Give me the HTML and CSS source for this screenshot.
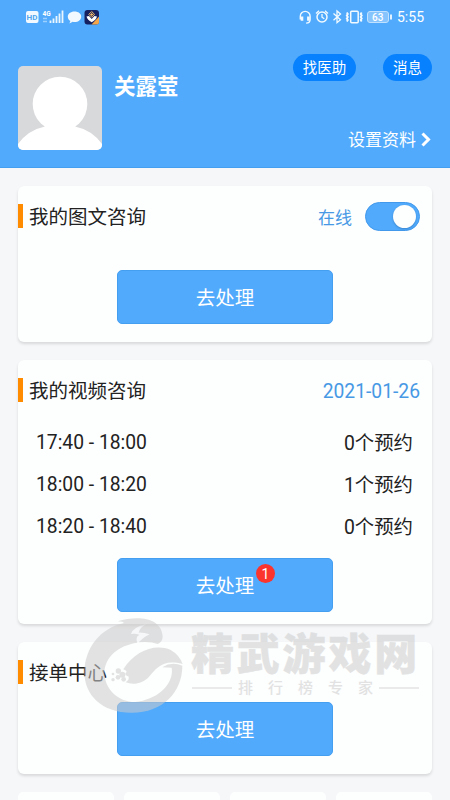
FILE: index.html
```html
<!DOCTYPE html>
<html lang="zh-CN">
<head>
<meta charset="utf-8">
<meta name="viewport" content="width=device-width, initial-scale=1">
<title>我的咨询</title>
<link rel="stylesheet" href="styles.css">
</head>
<body>
<div class="screen">
  <header class="header">
    <div class="status">
      <svg class="status-left" viewBox="0 0 76 18" width="76" height="18">
        <rect x="1" y="3" width="12.5" height="12" rx="2" fill="#f2faff"/>
        <text x="1.600" y="12.2" class="hd">HD</text>
        <text x="17.5" y="7.5" class="net">4G</text>
        <path d="M18 10.5h4M18 13.5h4" stroke="#9bd0ff" stroke-width="1.4"/>
        <path d="M25.5 12.5V15M28.5 10.5V15M31.5 8V15M34.5 5.5V15M37.5 2.5V15" stroke="#e9f6ff" stroke-width="1.8"/>
        <path d="M49.500 3.500c-4 0-6.700 2.300-6.700 5.200 0 1.800 1 3.300 2.600 4.200l-1 2.600 3.300-1.700c.6.100 1.200.2 1.800.2 3.900 0 6.700-2.300 6.700-5.300s-2.800-5.200-6.700-5.200z" fill="#f2faff"/>
        <rect x="59.500" y="2" width="14.500" height="14.500" rx="3" fill="#152060"/>
        <path d="M66.500 16.500l7.500-8V14q0 2.500-2.500 2.500z" fill="#f5a54a"/>
        <path d="M61.500 8.500l2.500-.5 2.700 3 2.700-3 2.600.5q-1 3.500-5.300 5.800-4.200-2.300-5.200-5.800z" fill="#fff"/>
        <path d="M66.700 3.500l2.900 2.900-2.900 2.900-2.900-2.900z" fill="#152060" stroke="#efb665" stroke-width="1"/>
        <path d="M66.700 5v3M65.200 6.500h3" stroke="#efb665"/>
      </svg>
      <div class="status-right">
        <svg viewBox="0 0 96 18" width="96" height="18" fill="none" stroke="#f2faff">
          <path d="M2.300 11.500V8.300a4.900 4.900 0 0 1 9.800 0v3.200q0 3.500-4 3.600" stroke-width="1.400"/>
          <path d="M4 8.500v4.200M10.400 8.500v4.200" stroke-width="2.600"/>
          <circle cx="24" cy="9" r="5" stroke-width="1.500"/>
          <path d="M24 6v3.200l2.300 1.600M18 5.500l3-2.700M30 5.500l-3-2.700" stroke-width="1.300"/>
          <path d="M35.500 5.500l7 6.200-3.500 3V3l3.500 3-7 6.200" stroke-width="1.300"/>
          <rect x="52.700" y="3.200" width="7.500" height="11.600" rx="1" stroke-width="1.500"/>
          <path d="M48.800 4.500l1 1.500-1 1.500 1 1.500-1 1.500 1 1.500-1 1.500M63.700 4.500l-1 1.500 1 1.500-1 1.500 1 1.500-1 1.500 1 1.500" stroke-width="1.900"/>
          <rect x="69.500" y="3.500" width="21" height="11" rx="2.500" fill="#86c4fd" stroke="#c0e1ff"/>
          <path d="M93 6.500v5" stroke-width="1.800"/>
          <text x="74" y="12.700" class="battery">63</text>
        </svg>
        <span class="clock">5:55</span>
      </div>
    </div>
    <div class="profile">
      <svg class="avatar" viewBox="0 0 84 84" width="84" height="84">
        <rect width="84" height="84" fill="#d8d9db"/>
        <circle cx="42" cy="38" r="27.300" fill="#fff"/>
        <path d="M0 78Q10 64 27 60.500L24 57H60L57 60.500Q74 64 84 78V84H0z" fill="#fff"/>
      </svg>
      <h1 class="name">关露莹</h1>
      <div class="actions">
        <div class="pills"><span class="pill">找医助</span><span class="pill small">消息</span></div>
        <div class="settings"><span>设置资料</span>
          <svg width="12" height="16" viewBox="0 0 12 16"><path d="M2.500 1.500l6 6-6 6" fill="none" stroke="#fff" stroke-width="3"/></svg>
        </div>
      </div>
    </div>
  </header>
  <main class="content">
    <section class="card card-text">
      <div class="card-head"><h2>我的图文咨询</h2><div class="online"><span>在线</span><i class="switch"></i></div></div>
      <div class="button">去处理</div>
    </section>
    <section class="card card-video">
      <div class="card-head"><h2>我的视频咨询</h2><span class="date">2021-01-26</span></div>
      <ul class="slots">
        <li><span class="time">17:40 - 18:00</span><span>0个预约</span></li>
        <li><span class="time">18:00 - 18:20</span><span>1个预约</span></li>
        <li><span class="time">18:20 - 18:40</span><span>0个预约</span></li>
      </ul>
      <div class="button">去处理<b class="badge">1</b></div>
    </section>
    <section class="card card-orders">
      <div class="card-head"><h2>接单中心</h2></div>
      <div class="button">去处理</div>
    </section>
    <div class="tiles"><i></i><i></i><i></i><i></i></div>
  </main>
  <div class="watermark">
    <svg class="mark" viewBox="0 0 360 330" width="120" height="110">
      <path d="M128 34C185 16 258 20 263 78Q263 96 248 102Q226 93 191 97Q211 78 224 73Q205 67 191 68Q194 52 215 41Q172 52 168 72Q180 69 193 74Q180 81 187 98C130 106 90 140 88 188C90 240 132 276 180 276C250 270 298 220 290 173L262 172Q290 154 322 167C322 245 265 308 170 308C80 308 28 255 28 185C30 115 75 55 145 40Q150 35 128 34Z"/>
      <path d="M145 178C180 122 240 100 287 120Q312 134 323 162C262 147 246 174 222 200C204 220 176 226 152 217Q165 209 160 199Q151 198 151 190Q161 184 145 178Z"/>
      <circle cx="130" cy="183" r="8"/><circle cx="142" cy="194" r="9"/><circle cx="129" cy="202" r="7"/><circle cx="146" cy="208" r="7"/><circle cx="114" cy="192" r="4"/><circle cx="114" cy="209" r="5"/>
    </svg>
    <div class="brand">
      <div class="brand-name">精武游戏网</div>
      <div class="brand-sub"><i></i><span>排行榜专家</span><i></i></div>
    </div>
  </div>
</div>
</body>
</html>
```

FILE: styles.css
```css
* { box-sizing: border-box; }
body { margin: 0; font-family: Roboto, "Noto Sans CJK SC", sans-serif; color: #222; }
h1, h2, ul { margin: 0; padding: 0; font-weight: 400; }
.screen { position: relative; width: 450px; height: 800px; overflow: hidden; background: #f6f7f9; }
.header { height: 168px; background: #51aafb; color: #fff; border-bottom: 1px solid #449ff1; }
.status { height: 34px; display: flex; justify-content: space-between; padding: 8px 25px 0; }
.status svg { display: block; }
.status-right { display: flex; gap: 3px; }
.clock { font-size: 14px; line-height: 19px; width: 28px; }
.hd { font: 700 8px Roboto, sans-serif; fill: #51a6ef; }
.net { font: 700 6.500px Roboto, sans-serif; fill: #fff; }
.battery { font: 500 10px Roboto, sans-serif; fill: #fff; stroke: none; }
.profile { display: flex; padding: 32px 18px 0; }
.avatar { border-radius: 5px; flex: none; }
.name { font-size: 21.500px; font-weight: 700; line-height: 30px; margin: 6px 0 0 12px; }
.actions { margin-left: auto; margin-top: -12px; display: flex; flex-direction: column; align-items: flex-end; }
.pills { display: flex; gap: 27px; }
.pill { width: 63px; height: 27px; border-radius: 14px; background: #0781fd; font-size: 14.500px; line-height: 29px; text-align: center; }
.pill.small { width: 49px; }
.settings { display: flex; align-items: center; gap: 4px; margin-top: 46px; font-size: 17px; line-height: 26px; }
.content { padding: 18px 18px 0; display: flex; flex-direction: column; gap: 18px; }
.card { background: #fdfefe; border-radius: 6px; box-shadow: 0 2px 3px rgba(0, 0, 0, .12); }
.card-text { height: 156px; }
.card-video { height: 264px; }
.card-orders { height: 132px; }
.card-head { display: flex; align-items: center; justify-content: space-between; height: 60px; padding-right: 12px; }
.card-head h2 { border-left: 5px solid #ff8c00; padding-left: 6px; line-height: 28px; height: 24px; font-size: 19.500px; }
.online { display: flex; align-items: center; gap: 13px; font-size: 17px; color: #4799e5; }
.switch { width: 55px; height: 29px; border-radius: 15px; background: #51aafb; border: 1px solid #4299ec; padding: 2px 3px; display: flex; justify-content: flex-end; }
.switch::after { content: ""; width: 23px; height: 23px; border-radius: 50%; background: #fdfefe; box-shadow: 0 1px 2px rgba(0, 50, 110, .3); }
.date { font-size: 19.300px; padding-top: 2px; color: #4799e5; }
.button { position: relative; width: 216px; height: 54px; margin: 24px auto 0; border-radius: 5px; background: #51aafb; border: 1px solid #459ff1; color: #fff; font-size: 19.500px; line-height: 55px; text-align: center; }
.card-video .button { margin-top: 12px; }
.card-orders .button { margin-top: 0; }
.slots { list-style: none; padding: 0 19px 0 18px; }
.slots li { display: flex; justify-content: space-between; align-items: center; height: 42px; font-size: 19.400px; }
.time { padding-top: 2px; font-size: 19.300px; }
.badge { position: absolute; left: 138px; top: 5px; width: 19px; height: 19px; border-radius: 50%; background: #fb342d; font-size: 14px; font-weight: 400; line-height: 20px; }
.tiles { display: grid; grid-template-columns: repeat(4, 1fr); gap: 10px; }
.tiles i { height: 60px; border-radius: 5px; background: #fdfefe; }
.watermark { position: absolute; left: 75px; top: 610px; display: flex; color: #cdcdcd; opacity: .56; pointer-events: none; }
.mark { fill: currentColor; display: block; }
.brand { width: 236px; padding: 18px 0 0 0; margin-left: -4px; }
.brand-name { font-size: 43px; font-weight: 900; line-height: 54px; letter-spacing: 2.800px; white-space: nowrap; -webkit-text-stroke: .5px currentColor; }
.brand-sub { display: flex; align-items: center; width: 227px; margin-left: 1px; font-size: 15px; line-height: 20px; margin-top: -4px; }
.brand-sub i { flex: 1; height: 2px; background: currentColor; opacity: .7; }
.brand-sub span { letter-spacing: 15px; margin: 0 -9px 0 6px; font-weight: 500; }
```
